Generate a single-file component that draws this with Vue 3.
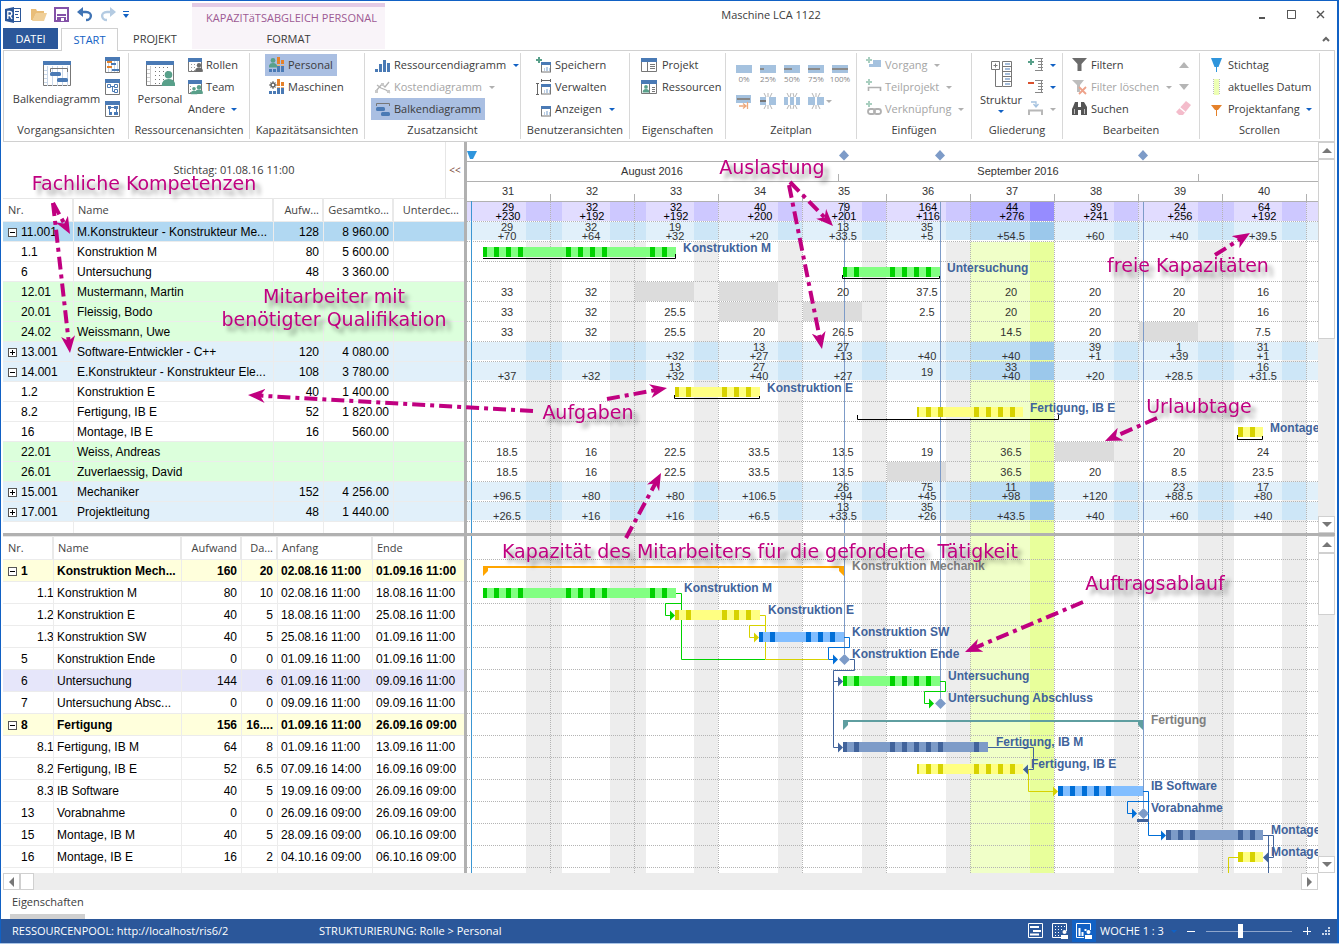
<script setup>
import { h } from 'vue'

const B = '#4a7ab5'
const G = '#777777'
const frame = (x, y, w, hh) =>
  `<path d="M${x + 0.5} ${y}v${hh - 0.5}h${w - 1}v${-(hh - 0.5)}" fill="#fff" stroke="${G}"/><rect x="${x}" y="${y}" width="${w}" height="4" fill="${B}"/>`
const person = (cx, y, s, c) =>
  `<circle cx="${cx}" cy="${y + s}" r="${s}" fill="${c}"/><path d="M${cx - s * 1.8} ${y + s * 4}q0 ${-s * 1.9} ${s * 1.8} ${-s * 1.9}t${s * 1.8} ${s * 1.9}z" fill="${c}"/>`
const viewIcon = '<rect x="5.500" y="5.500" width="9" height="9.500" fill="#fff" stroke="#777"/><rect x="5" y="5" width="10" height="3" fill="#4a7ab5"/><path d="M8 11h1v3h-1zM10 10h2v4h-2zM13 11h1v3h-1z" fill="#b9cde4"/>'
const plus = (x, y, c) => `<path d="M${x + 2} ${y}h2v2h2v2h-2v2h-2v-2h-2v-2h2z" fill="${c}"/>`
const capacity = '<path d="M8 0h3v7h-3zM12 3h3v4h-3z" fill="#e5812a"/><path d="M8 8h3v2h-3zM12 8h3v2h-3z" fill="#e9b17c"/><path d="M0 12h3v3H0zM4 12h3v3H4zM8 9h3v6h-3zM12 9h3v6h-3z" fill="#4a7ab5"/>'

const icons = {
  app: '<rect x="6.500" y="1.500" width="9" height="13" fill="#fff" stroke="#2b579a"/><path d="M10 4.500h4M10 7.500h3M11 10.500h3" stroke="#2b579a"/><path d="M0 2l9-2v16l-9-2z" fill="#2b579a"/><path d="M2.800 12V4.500h2q2 0 2 2t-2 2h-2M5 8.500L7 12" fill="none" stroke="#fff" stroke-width="1.300"/>',
  open: '<path d="M0 13V2h5l1 2h7v3H5L2 13z" fill="#e9bd78"/><path d="M1 14L5 6h11l-3 8z" fill="#f0cf98"/>',
  save: '<path d="M1 1h13v13H1z" fill="#fff" stroke="#8452a8" stroke-width="2"/><path d="M3 7h9v2H3zM3 10h9v4H3z" fill="#8452a8"/><path d="M5 11h5v3H5z" fill="#fff"/><path d="M5 11h2v3H5z" fill="#8452a8"/>',
  undo: '<path d="M2 5h7c7 0 6 8 0 8" fill="none" stroke="#3f73b4" stroke-width="2.400"/><path d="M6 0L0 5l6 5z" fill="#3f73b4"/>',
  redo: '<path d="M14 5H7c-7 0-6 8 0 8" fill="none" stroke="#b4cbe2" stroke-width="2.400"/><path d="M10 0l6 5-6 5z" fill="#b4cbe2"/>',
  gantt: frame(0, 0, 28, 25) + `<path d="M4.500 5v20M9.500 5v20M14.500 5v20M19.500 5v20M24.500 5v20M1 9.500h3M1 13.500h3M1 17.500h3M1 21.500h3" stroke="#c9d7e8"/><path d="M7.500 11V7.500h17V11" fill="none" stroke="${G}"/><rect x="7" y="11" width="11" height="4" rx="1.500" fill="${B}"/><rect x="14" y="17" width="11" height="4" rx="1.500" fill="${B}"/>`,
  people: frame(0, 0, 28, 25) + `<path d="M4.500 5v19M1 8.500h3M1 12.500h3M1 16.500h3M1 20.500h3" stroke="#ccc"/><path d="M9.500 6v18M13.500 6v18M17.500 6v18M21.500 6v8" stroke="${G}" stroke-dasharray="1 3"/>` + person(22.500, 10, 3.800, '#58a08a'),
  small1: frame(0, 0, 15, 16) + '<path d="M3.500 4v11M6.500 4v11M9.500 4v11M12.500 4v11" stroke="#c9d7e8"/><rect x="2" y="4" width="5" height="2" fill="#e5812a"/><rect x="2" y="9" width="5" height="2" fill="#e5812a"/><rect x="6" y="6" width="5" height="2" fill="#4a7ab5"/><rect x="7" y="12" width="7" height="2" fill="#4a7ab5"/>',
  small2: frame(0, 0, 15, 16) + '<path d="M2.500 5.500h3v3h-3zM9.500 5.500h3v3h-3zM9.500 10.500h3v3h-3zM6 7.500h3M7.500 8v4.500h2" fill="none" stroke="#4a7ab5"/>',
  small3: frame(0, 0, 15, 16) + '<path d="M3 5h3v3H3zM9 5h4v3H9zM4 11h3v3H4zM9 11h4v3H9z" fill="#4a7ab5"/><path d="M6 6.500h3M4.500 8v4h1M11.500 8v3" fill="none" stroke="#4a7ab5"/>',
  roles: frame(0, 1, 14, 14) + '<path d="M3.500 7v7M6.500 7v7" stroke="#999" stroke-dasharray="1 2"/>' + person(11, 6, 2.200, '#6b6b6b'),
  team: frame(0, 1, 14, 14) + '<path d="M2.500 7v7" stroke="#999" stroke-dasharray="1 2"/>' + person(6, 8, 1.800, '#58a08a') + person(11, 6, 2.200, '#58a08a'),
  capPerson: capacity + person(4, 1, 2.400, '#58a08a'),
  capMachine: capacity + '<circle cx="4" cy="6" r="2" fill="none" stroke="#666" stroke-width="1.600"/><path d="M4 2v2M4 8v2M0 6h2M6 6h2M1.500 3.500l1 1M5.500 7.500l1 1M6.500 3.500l-1 1M1.500 8.500l1-1" stroke="#666"/>',
  bars: '<path d="M0 12h3v3H0zM4 7h3v8H4zM8 3h3v12H8zM12 6h3v9h-3z" fill="#4a7ab5"/>',
  cost: '<path d="M1 12L7 5l3 3 4-5M2 6l4 3 5 2 4 3" fill="none" stroke="#b5b5b5" stroke-width="1.300"/><path d="M0 11h3v3H0zM6 4h3v3H6zM12 11h3v3h-3z" fill="#c9c9c9"/>',
  barChart: `<path d="M1.500 5V2.500h13V5" fill="none" stroke="${G}"/><rect x="1" y="6" width="9" height="4" rx="1.500" fill="${B}"/><rect x="6" y="11" width="9" height="4" rx="1.500" fill="${B}"/>`,
  saveView: plus(0, 0, '#58a08a') + viewIcon,
  manageView: '<path d="M1.500 4.500v11M0 4.500h3M0 15.500h3M5 1.500h10M5.500 0v3M14.500 0v3" stroke="#666"/>' + viewIcon,
  showView: viewIcon,
  project: frame(0, 1, 16, 14) + '<path d="M6.500 5v9M9 7.500h5M9 9.500h5M9 11.500h5" stroke="#777"/>',
  resource: frame(0, 1, 16, 14) + person(5, 6, 1.900, '#58a08a') + '<path d="M8.500 5v9M11 8.500h3M11 10.500h3M11 12.500h3" stroke="#777"/>',
  move: '<rect y="2" width="15" height="8" fill="#a5c2df"/><path d="M1 6h13" stroke="#888" stroke-width="2"/><path d="M3 13h6M7 10.500l3 2.500-3 2.500M11.500 9v7" fill="none" stroke="#eea97c" stroke-width="1.300"/>',
  split1: '<path d="M4 0l2 4M8 0v4M12 0l-2 4M4 16l2-4M8 16v-4M12 16l-2-4" stroke="#b5b5b5"/><path d="M0 4h6v8H0zM9 4h7v8H9z" fill="#a5c2df"/><path d="M0 8h6" stroke="#777" stroke-width="2"/>',
  split2: '<path d="M3 0l2 4M7 0L6 4M9 0l1 4M13 0l-2 4M3 16l2-4M7 16l-1-4M9 16l1-4M13 16l-2-4" stroke="#b5b5b5"/><path d="M0 4h4v8H0zM6 4h4v8H6zM12 4h4v8h-4z" fill="#a5c2df"/>',
  split3: '<path d="M4 0l2 4M8 0v4M12 0l-2 4M4 16l2-4M8 16v-4M12 16l-2-4" stroke="#b5b5b5"/><path d="M0 4h7v8H0zM9 4h7v8H9z" fill="#a5c2df"/>',
  task: plus(0, 0, '#a9cfc0') + '<path d="M7 3h8v7H3V7h4z" fill="#a5c2df"/>',
  subproject: plus(0, 0, '#a9cfc0') + '<path d="M2.500 12V8.500h12V12" fill="none" stroke="#b0b0b0" stroke-width="1.600"/>',
  link: plus(0, 0, '#a9cfc0') + '<rect x="2" y="8" width="7" height="5" rx="2.500" fill="none" stroke="#b0b0b0" stroke-width="1.800"/><rect x="8" y="8" width="7" height="5" rx="2.500" fill="none" stroke="#b0b0b0" stroke-width="1.800"/>',
  structure: '<path d="M.5.500h8v8h-8zM4.500 2.500v4M2.500 4.500h4M4.500 9v16.500H11" fill="none" stroke="#777"/><path d="M11.500.500h9v25h-9z" fill="#fff" stroke="#777"/><path d="M11 5.500h10M11 10.500h10M11 15.500h10M11 20.500h10" stroke="#777"/><path d="M14 3h5M14 8h5M14 13h5M14 18h5M14 23h5" stroke="#4a7ab5"/>',
  indent: plus(0, 2, '#58a08a') + '<path d="M7 1.500h8M10 4.500h5M10 7.500h5M10 10.500h5M7 13.500h8M13.500 1v12" stroke="#888"/>',
  outdent: '<rect y="3" width="6" height="2" fill="#d9502e"/><path d="M7 1.500h8M10 4.500h5M10 7.500h5M10 10.500h5M7 13.500h8M13.500 1v12" stroke="#888"/>',
  collapse: '<path d="M1 14V9.500h13V14" fill="none" stroke="#b8b8b8" stroke-width="2"/><path d="M3 1h5v4M5.500 3L8 6l2.500-3" fill="none" stroke="#a5c2df" stroke-width="1.300"/>',
  filter: '<path d="M0 1h15l-5.500 6v7h-4V7z" fill="#6b6b6b"/>',
  filterOff: '<path d="M0 1h12L8 6v7H5V6z" fill="#bdbdbd"/><path d="M7 8l7 7M14 8l-7 7" stroke="#eea28a" stroke-width="1.800"/>',
  search: '<path d="M1 6l2-5h3v5h3V1h3l3 5v8H9V9H6v5H0V8z" fill="#555"/><path d="M2.500 8v5M12.500 8v5" stroke="#bbb"/>',
  eraser: '<path d="M10 0l5 4-8 10H3l-3-3z" fill="#f4bccb"/><path d="M3 6l6 5" stroke="#fff" stroke-width="1.500"/>',
  pinBlue: '<path d="M1 1h11L8.500 10h-4z" fill="#2f95dc"/><path d="M6.500 8v7" stroke="#2f95dc"/>',
  today: '<rect x="4" y="0" width="5" height="16" fill="#edffb4"/><path d="M3.500 0v16M9.500 0v16" stroke="#bbb" stroke-dasharray="1 1"/>',
  pinOrange: '<path d="M1 4h11L8 9H5z" fill="#e5812a"/><path d="M6.500 8v7" stroke="#e5812a"/>',
  st1: '<path d="M.5.500h14v14H.5z" fill="none" stroke="#fff"/><path d="M2 4h9M5 8h8M2 11.500h9" stroke="#fff" stroke-width="2"/>',
  st2: '<path d="M9 14.500H.5V.500h14V8" fill="none" stroke="#fff"/><path d="M3.500 3v10M6.500 3v10M9.500 3v5M12.500 3v3" stroke="#fff" stroke-dasharray="1 2"/><circle cx="12.500" cy="9" r="2" fill="#fff"/><path d="M9 12h7v4H9z" fill="#fff"/>',
  st3: '<path d="M8 14.500H.5V.500h14V7" fill="none" stroke="#fff"/><path d="M3.500 5v8M6.500 9v4M9.500 6v2" stroke="#fff" stroke-width="2"/><circle cx="12.500" cy="9" r="2" fill="#fff"/><path d="M9 12h7v4H9z" fill="#fff"/>',
}
const Icon = (p) =>
  h('svg', { width: p.w || 16, height: p.h || 16, viewBox: `0 0 ${p.w || 16} ${p.h || 16}`, 'aria-hidden': 'true', innerHTML: icons[p.name] })
Icon.props = ['name', 'w', 'h']

/* resource table */
const resources = [
  { k: 'sel', exp: '-', nr: '11.001', name: 'M.Konstrukteur - Konstrukteur Me...', a: '128', g: '8 960.00',
    up: [29, 32, 19, '', 13, 35, '', '', '', ''], lo: ['+70', '+64', '+32', '+20', '+33.5', '+5', '+54.5', '+60', '+40', '+39.5'] },
  { k: '', nr: '1.1', name: 'Konstruktion M', a: '80', g: '5 600.00' },
  { k: '', nr: '6', name: 'Untersuchung', a: '48', g: '3 360.00' },
  { k: 'staff', nr: '12.01', name: 'Mustermann, Martin', mid: ['33', '32', null, null, '20', '37.5', '20', '20', '20', '16'] },
  { k: 'staff', nr: '20.01', name: 'Fleissig, Bodo', mid: ['33', '32', '25.5', null, null, '2.5', '20', '20', '20', '16'] },
  { k: 'staff', nr: '24.02', name: 'Weissmann, Uwe', mid: ['33', '32', '25.5', '20', '26.5', '', '14.5', '20', null, '7.5'] },
  { k: 'role', exp: '+', nr: '13.001', name: 'Software-Entwickler - C++', a: '120', g: '4 080.00',
    up: ['', '', '', 13, 27, '', '', 39, 1, 31], lo: ['', '', '+32', '+27', '+13', '+40', '+40', '+1', '+39', '+1'] },
  { k: 'role', exp: '-', nr: '14.001', name: 'E.Konstrukteur - Konstrukteur Ele...', a: '108', g: '3 780.00',
    up: ['', '', 13, 27, '', '', 33, '', '', 16], lo: ['+37', '+32', '+32', '+40', '+27', '', '+40', '+20', '+28.5', '+31.5'],
    mid: ['', '', '', '', '', '19', '', '', '', ''] },
  { k: '', nr: '1.2', name: 'Konstruktion E', a: '40', g: '1 400.00' },
  { k: '', nr: '8.2', name: 'Fertigung, IB E', a: '52', g: '1 820.00' },
  { k: '', nr: '16', name: 'Montage, IB E', a: '16', g: '560.00' },
  { k: 'staff', nr: '22.01', name: 'Weiss, Andreas', mid: ['18.5', '16', '22.5', '33.5', '13.5', '19', '36.5', null, '20', '24'] },
  { k: 'staff', nr: '26.01', name: 'Zuverlaessig, David', mid: ['18.5', '16', '22.5', '33.5', '13.5', null, '36.5', '20', '8.5', '23.5'] },
  { k: 'role', exp: '+', nr: '15.001', name: 'Mechaniker', a: '152', g: '4 256.00',
    up: ['', '', '', '', 26, 75, 11, '', 23, 17], lo: ['+96.5', '+80', '+80', '+106.5', '+94', '+45', '+98', '+120', '+88.5', '+80'] },
  { k: 'role', exp: '+', nr: '17.001', name: 'Projektleitung', a: '48', g: '1 440.00',
    up: ['', '', '', '', 13, 35, '', '', '', ''], lo: ['+26.5', '+16', '+16', '+6.5', '+33.5', '+26', '+43.5', '+40', '+60', '+40'] },
]
const totals = {
  up: [29, 32, 32, 40, 79, 164, 44, 39, 24, 64],
  lo: ['+230', '+192', '+192', '+200', '+201', '+116', '+276', '+241', '+256', '+192'],
}

/* task table */
const T = (k, nr, name, a, d, s, e, exp = '') => ({ k, nr, name, a, d, s, e, exp })
const tasks = [
  T('sum', '1', 'Konstruktion Mech...', '160', '20', '02.08.16 11:00', '01.09.16 11:00', '-'),
  T('sub', '1.1', 'Konstruktion M', '80', '10', '02.08.16 11:00', '18.08.16 11:00'),
  T('sub', '1.2', 'Konstruktion E', '40', '5', '18.08.16 11:00', '25.08.16 11:00'),
  T('sub', '1.3', 'Konstruktion SW', '40', '5', '25.08.16 11:00', '01.09.16 11:00'),
  T('', '5', 'Konstruktion Ende', '0', '0', '01.09.16 11:00', '01.09.16 11:00'),
  T('hot', '6', 'Untersuchung', '144', '6', '01.09.16 11:00', '09.09.16 11:00'),
  T('', '7', 'Untersuchung Absc...', '0', '0', '09.09.16 11:00', '09.09.16 11:00'),
  T('sum', '8', 'Fertigung', '156', '16....', '01.09.16 11:00', '26.09.16 09:00', '-'),
  T('sub', '8.1', 'Fertigung, IB M', '64', '8', '01.09.16 11:00', '13.09.16 11:00'),
  T('sub', '8.2', 'Fertigung, IB E', '52', '6.5', '07.09.16 14:00', '16.09.16 09:00'),
  T('sub', '8.3', 'IB Software', '40', '5', '19.09.16 09:00', '26.09.16 09:00'),
  T('', '13', 'Vorabnahme', '0', '0', '26.09.16 09:00', '26.09.16 09:00'),
  T('', '15', 'Montage, IB M', '40', '5', '28.09.16 09:00', '06.10.16 09:00'),
  T('', '16', 'Montage, IB E', '16', '2', '04.10.16 09:00', '06.10.16 09:00'),
]

/* time scale: 12 px per day, 84 px per week; week 31 starts at 466 */
const weeks = Array.from({ length: 30 }, (_, i) => ({ i, no: 31 + i, x: 466 + i * 84 }))
const shown = weeks.slice(0, 10)
const holidays = [1, 2, 9]
const offDays = weeks.flatMap((w) => {
  const list = [{ x: w.x + 60, w: 24, now: w.i === 6 }]
  if (holidays.includes(w.i)) list.push({ x: w.x, w: 12, now: false })
  return list
})
const stripes = (x0, x1) => {
  const out = []
  for (const w of weeks) {
    for (let d = 0; d < 5; d++) {
      if (d === 0 && holidays.includes(w.i)) continue
      const s = w.x + d * 12 + 4
      if (s + 5 <= x0 || s >= x1 - 3) continue
      out.push({ x: Math.max(s, x0), w: s + 5 - Math.max(s, x0) })
    }
  }
  return out
}
const green = ['#82ff82', '#00d200']
const yellow = ['#ffff82', '#d7d200']
const blue = ['#82beff', '#006ed7']
const steel = ['#7d9bc8', '#41639b']
const bar = (row, x0, x1, c, label, lx, br) => ({ row, x0, x1, c, label, lx, br, s: stripes(x0, x1) })
const upperBars = [
  bar(1, 483, 676, green, 'Konstruktion M', 683, 'M483 258.500H675.500V254'),
  bar(2, 843, 940, green, 'Untersuchung', 947, 'M842.500 275V278.500H939.500V276'),
  bar(8, 675, 760, yellow, 'Konstruktion E', 767, 'M674.500 395V398.500H759.500V396'),
  bar(9, 917, 1023, yellow, 'Fertigung, IB E', 1030, 'M857.500 415V419.500H1058.500V415'),
  bar(10, 1238, 1263, yellow, 'Montage, IB E', 1270, 'M1237.500 435V439.500H1262.500V436'),
]
const lowerBars = [
  bar(1, 483, 676, green, 'Konstruktion M', 684),
  bar(2, 675, 760, yellow, 'Konstruktion E', 768),
  bar(3, 759, 844, blue, 'Konstruktion SW', 852),
  bar(5, 843, 940, green, 'Untersuchung', 948),
  bar(8, 843, 988, steel, 'Fertigung, IB M', 996),
  bar(9, 917, 1023, yellow, 'Fertigung, IB E', 1031),
  bar(10, 1058, 1143, blue, 'IB Software', 1151),
  bar(12, 1166, 1263, steel, 'Montage, IB M', 1271),
  bar(13, 1238, 1263, yellow, 'Montage, IB E', 1271),
]
const milestones = [
  { x: 844, y: 659, label: 'Konstruktion Ende', lx: 852 },
  { x: 940, y: 703, label: 'Untersuchung Abschluss', lx: 948 },
  { x: 1143, y: 813, label: 'Vorabnahme', lx: 1151 },
]
const summaries = [
  { x0: 483, x1: 844, y: 566, c: '#ffa500', label: 'Konstruktion Mechanik', lx: 852 },
  { x0: 843, x1: 1143, y: 720, c: '#5f9ea0', label: 'Fertigung', lx: 1151 },
]
const links = [
  { c: green[1], d: 'M676 593.500H681.500V603.500H665.500V615.500H670M681.500 603V659.500H765' },
  { c: yellow[1], d: 'M760 615.500H765.500V625.500H749.500V637.500H755M765.500 625V659.500H828' },
  { c: blue[1], d: 'M844 637.500H849.500V647.500H828.500V659.500H834' },
  { c: steel[1], d: 'M850 659.500H854.500V670.500H833.500V747.500H839M833.500 681.500H839' },
  { c: green[1], d: 'M940 681.500H945.500V691.500H924.500V703.500H930' },
  { c: steel[1], d: 'M988 747.500H1033.500V769.500H1028' },
  { c: yellow[1], d: 'M1023 769.500H1028.500V791.500H1054' },
  { c: blue[1], d: 'M1143 791.500H1148.500V835.500H1162M1148.500 801.500H1127.500V813.500H1133' },
  { c: steel[1], d: 'M1263 835.500H1273.500V857.500H1268M1268.500 835V873' },
  { c: yellow[1], d: 'M1238 857.500H1228.500V873' },
]
const heads = [
  [675, 615, green[1], 1], [759, 637, yellow[1], 1], [838, 659, blue[1], 1], [843, 681, steel[1], 1],
  [843, 747, steel[1], 1], [934, 703, green[1], 1], [1023, 769, steel[1], -1], [1058, 791, yellow[1], 1],
  [1137, 813, blue[1], 1], [1166, 835, blue[1], 1], [1263, 857, steel[1], -1],
]
const deadlines = [[844, 654], [940, 698], [1143, 808]]

/* callouts */
const notes = [
  [144, 190, 'Fachliche Kompetenzen'], [334, 303, 'Mitarbeiter mit'], [334, 326, 'benötigter Qualifikation'],
  [772, 174, 'Auslastung'], [1188, 272, 'freie Kapazitäten'], [588, 419, 'Aufgaben'], [1199, 413, 'Urlaubtage'],
  [760, 558, 'Kapazität des Mitarbeiters für die geforderte  Tätigkeit'], [1155, 590, 'Auftragsablauf'],
]
const arrows = [
  [53, 203, 70, 234], [53, 203, 70, 353], [790, 182, 833, 226], [789, 185, 822, 349], [1215, 255, 1250, 233],
  [533, 411, 248, 395], [607, 399, 667, 388], [1157, 418, 1105, 441], [626, 538, 661, 473], [1083, 602, 965, 652],
].map(([x1, y1, x2, y2]) => {
  const len = Math.hypot(x2 - x1, y2 - y1)
  return { x1, y1, x2: x2 - ((x2 - x1) / len) * 10, y2: y2 - ((y2 - y1) / len) * 10 }
})
</script>

<template>
  <div class="window">
    <header class="titlebar">
      <div class="quick">
        <Icon name="app" />
        <button aria-label="Öffnen"><Icon name="open" /></button>
        <button aria-label="Speichern"><Icon name="save" /></button>
        <button aria-label="Rückgängig"><Icon name="undo" /></button>
        <button aria-label="Wiederholen"><Icon name="redo" /></button>
        <button aria-label="Anpassen"><svg width="6" height="8"><path d="M0 .500h6" stroke="#1161c4" /><path d="M0 3h6L3 7z" fill="#1161c4" /></svg></button>
      </div>
      <div class="context-title">KAPAZITäTSABGLEICH PERSONAL</div>
      <h1>Maschine LCA 1122</h1>
      <div class="sys">
        <button aria-label="Minimieren"><svg width="9" height="9"><path d="M1 8h6" stroke="#555" stroke-width="2" /></svg></button>
        <button aria-label="Maximieren"><svg width="9" height="9"><path d="M.5 0v8.500h8V.500H0" fill="none" stroke="#555" /></svg></button>
        <button aria-label="Schließen"><svg width="9" height="9"><path d="M1 1l7 7M8 1l-7 7" stroke="#555" stroke-width="1.400" /></svg></button>
      </div>
    </header>

    <nav class="tabs">
      <button class="file">DATEI</button>
      <button class="active">START</button>
      <button class="projekt">PROJEKT</button>
      <button class="format">FORMAT</button>
      <button class="fold" aria-label="Menüband reduzieren"><svg width="8" height="6"><path d="M1 5l3-3 3 3" fill="none" stroke="#666" stroke-width="2" /></svg></button>
    </nav>

    <section class="ribbon">
      <div class="group g1">
        <div class="body">
          <button class="big"><Icon name="gantt" w="28" h="25" /><span>Balkendiagramm</span></button>
          <div class="col">
            <button class="item bare" aria-label="Ansicht Netzplan"><Icon name="small1" /></button>
            <button class="item bare" aria-label="Ansicht Struktur"><Icon name="small2" /></button>
            <button class="item bare" aria-label="Ansicht Tabelle"><Icon name="small3" /></button>
          </div>
        </div>
        <div class="cap">Vorgangsansichten</div>
      </div>
      <div class="group g2">
        <div class="body">
          <button class="big"><Icon name="people" w="29" h="25" /><span>Personal</span></button>
          <div class="col">
            <button class="item bare"><Icon name="roles" />Rollen</button>
            <button class="item bare"><Icon name="team" />Team</button>
            <button class="item bare">Andere<i class="arr"></i></button>
          </div>
        </div>
        <div class="cap">Ressourcenansichten</div>
      </div>
      <div class="group g3">
        <div class="body col">
          <button class="item on"><Icon name="capPerson" />Personal</button>
          <button class="item"><Icon name="capMachine" />Maschinen</button>
        </div>
        <div class="cap">Kapazitätsansichten</div>
      </div>
      <div class="group g4">
        <div class="body col">
          <button class="item"><Icon name="bars" />Ressourcendiagramm<i class="arr"></i></button>
          <button class="item" disabled><Icon name="cost" />Kostendiagramm<i class="arr"></i></button>
          <button class="item on"><Icon name="barChart" />Balkendiagramm</button>
        </div>
        <div class="cap">Zusatzansicht</div>
      </div>
      <div class="group g5">
        <div class="body col">
          <button class="item"><Icon name="saveView" />Speichern</button>
          <button class="item"><Icon name="manageView" />Verwalten</button>
          <button class="item"><Icon name="showView" />Anzeigen<i class="arr"></i></button>
        </div>
        <div class="cap">Benutzeransichten</div>
      </div>
      <div class="group g6">
        <div class="body col">
          <button class="item"><Icon name="project" />Projekt</button>
          <button class="item"><Icon name="resource" />Ressourcen</button>
        </div>
        <div class="cap">Eigenschaften</div>
      </div>
      <div class="group g7">
        <div class="body col">
          <div class="percents">
            <button v-for="(p, i) in ['0%', '25%', '50%', '75%', '100%']" :key="p" disabled>
              <svg width="16" height="8"><rect width="16" height="8" fill="#a5c2df" /><path :d="`M0 4h${i * 4}`" stroke="#8a8a8a" stroke-width="2" /></svg>
              {{ p }}
            </button>
          </div>
          <div class="splits">
            <button disabled aria-label="Verschieben"><Icon name="move" /></button>
            <button disabled aria-label="Unterbrechen"><Icon name="split1" /></button>
            <button disabled aria-label="Teilen"><Icon name="split2" /></button>
            <button disabled aria-label="Trennen"><Icon name="split3" /><i class="arr"></i></button>
          </div>
        </div>
        <div class="cap">Zeitplan</div>
      </div>
      <div class="group g8">
        <div class="body col">
          <button class="item" disabled><Icon name="task" />Vorgang<i class="arr"></i></button>
          <button class="item" disabled><Icon name="subproject" />Teilprojekt<i class="arr"></i></button>
          <button class="item" disabled><Icon name="link" />Verknüpfung<i class="arr"></i></button>
        </div>
        <div class="cap">Einfügen</div>
      </div>
      <div class="group g9">
        <div class="body">
          <button class="big"><Icon name="structure" w="21" h="26" /><span>Struktur</span><i class="arr"></i></button>
          <div class="col">
            <button class="item bare" aria-label="Einblenden"><Icon name="indent" /><i class="arr"></i></button>
            <button class="item bare" aria-label="Ausblenden"><Icon name="outdent" /><i class="arr"></i></button>
            <button class="item bare" disabled aria-label="Zusammenfassen"><Icon name="collapse" /><i class="arr"></i></button>
          </div>
        </div>
        <div class="cap">Gliederung</div>
      </div>
      <div class="group g10">
        <div class="body spread">
          <div class="col">
            <button class="item"><Icon name="filter" />Filtern</button>
            <button class="item" disabled><Icon name="filterOff" />Filter löschen<i class="arr"></i></button>
            <button class="item"><Icon name="search" />Suchen</button>
          </div>
          <div class="col mid">
            <button class="item bare" aria-label="Vorheriger"><svg width="10" height="6"><path d="M0 6l5-6 5 6z" fill="#b5b5b5" /></svg></button>
            <button class="item bare" aria-label="Nächster"><svg width="10" height="6"><path d="M0 0l5 6 5-6z" fill="#b5b5b5" /></svg></button>
            <button class="item bare" aria-label="Löschen"><Icon name="eraser" /></button>
          </div>
        </div>
        <div class="cap">Bearbeiten</div>
      </div>
      <div class="group g11">
        <div class="body col">
          <button class="item"><Icon name="pinBlue" />Stichtag</button>
          <button class="item"><Icon name="today" />aktuelles Datum</button>
          <button class="item"><Icon name="pinOrange" />Projektanfang<i class="arr"></i></button>
        </div>
        <div class="cap">Scrollen</div>
      </div>
    </section>

    <main class="work">
      <div class="pane">
        <div class="keydate"><span>Stichtag: 01.08.16 11:00</span><button>&lt;&lt;</button></div>
        <table class="res">
          <colgroup><col class="c-nr" /><col class="c-name" /><col class="c-a" /><col class="c-g" /><col /></colgroup>
          <thead>
            <tr><th>Nr.</th><th>Name</th><th class="r">Aufw...</th><th class="r">Gesamtko...</th><th class="r">Unterdec...</th></tr>
          </thead>
          <tbody>
            <tr v-for="r in resources" :key="r.nr" :class="r.k">
              <td class="nr"><button v-if="r.exp" class="exp" :aria-label="r.exp === '+' ? 'Aufklappen' : 'Zuklappen'"><svg width="7" height="7"><path :d="r.exp === '+' ? 'M1 3.500h5M3.500 1v5' : 'M1 3.500h5'" stroke="#000" /></svg></button><span>{{ r.nr }}</span></td>
              <td>{{ r.name }}</td><td class="r">{{ r.a }}</td><td class="r">{{ r.g }}</td><td></td>
            </tr>
            <tr class="rest"><td></td><td></td><td></td><td></td><td></td></tr>
          </tbody>
        </table>
      </div>
      <div class="vsplit"></div>
      <svg class="chart upper" role="img" aria-label="Kapazitätsdiagramm">
        <g transform="translate(-467 -142)">
          <g class="scale">
            <path d="M467 161.500H4000M467 181.500H4000M467 201.500H4000M838.500 174V181M1198.500 174V181" class="axis" />
            <path v-for="w in weeks" :key="w.i" :d="`M${w.x + 84}.500 194V201`" class="axis" />
            <text x="652" y="175">August 2016</text>
            <text x="1018" y="175">September 2016</text>
            <text v-for="w in shown" :key="w.no" :x="w.x + 42" y="195">{{ w.no }}</text>
            <path d="M467 151h10l-4 8h-3z" fill="#2f95dc" />
            <path v-for="d in deadlines" :key="d[0]" :d="`M${d[0]} 150l5 5.500-5 5-5-5z`" fill="#7d9bc8" />
          </g>
          <rect x="970" y="242" width="84" height="300" fill="#f0ffc8" />
          <rect v-for="(o, i) in offDays" :key="i" :x="o.x" y="242" :width="o.w" height="300" :fill="o.now ? '#e8ff9b' : '#ededed'" />
          <rect x="467" y="202" width="3000" height="19" fill="#e1dcff" />
          <rect x="970" y="202" width="84" height="19" fill="#b9b4ff" />
          <rect v-for="(o, i) in offDays" :key="'t' + i" :x="o.x" y="202" :width="o.w" height="19" :fill="o.now ? '#968cff' : '#cdc8ff'" />
          <template v-for="(r, n) in resources" :key="'b' + n">
            <g v-if="r.lo">
              <rect x="467" :y="222 + n * 20" width="3000" height="18" fill="#e1f0fa" />
              <rect x="970" :y="222 + n * 20" width="84" height="18" fill="#bcdcf3" />
              <rect v-for="(o, i) in offDays" :key="i" :x="o.x" :y="222 + n * 20" :width="o.w" height="18" :fill="o.now ? '#9bc8eb' : '#cde6f7'" />
            </g>
            <g v-else-if="r.mid">
              <template v-for="(v, i) in r.mid" :key="i"><rect v-if="v === null" :x="466 + i * 84 + 1" :y="222 + n * 20" width="59" height="19" fill="#dcdcdc" /></template>
            </g>
          </template>
          <path v-for="n in 16" :key="'h' + n" :d="`M467 ${201 + n * 20}.500H4000`" class="dots" />
          <path v-for="w in weeks" :key="'v' + w.i" :d="`M${w.x + 84}.500 202V533`" class="dots" />
          <path v-for="d in deadlines" :key="'d' + d[0]" :d="`M${d[0]}.500 202V533`" stroke="#7d9bc8" />
          <path d="M471.500 201V533" stroke="#3c96d2" />
          <template v-for="w in shown" :key="'x' + w.no">
            <text :x="w.x + 42" y="211" class="tot">{{ totals.up[w.i] }}</text>
            <text :x="w.x + 42" y="220" class="tot">{{ totals.lo[w.i] }}</text>
            <template v-for="(r, n) in resources" :key="n">
              <text v-if="r.up && r.up[w.i]" :x="w.x + 41" :y="231 + n * 20">{{ r.up[w.i] }}</text>
              <text v-if="r.lo && r.lo[w.i]" :x="w.x + 41" :y="240 + n * 20">{{ r.lo[w.i] }}</text>
              <text v-if="r.mid && r.mid[w.i]" :x="w.x + 41" :y="236 + n * 20">{{ r.mid[w.i] }}</text>
            </template>
          </template>
          <g v-for="b in upperBars" :key="b.label">
            <rect :x="b.x0" :y="227 + b.row * 20" :width="b.x1 - b.x0" height="10" :fill="b.c[0]" />
            <rect v-for="s in b.s" :key="s.x" :x="s.x" :y="227 + b.row * 20" :width="s.w" height="10" :fill="b.c[1]" />
            <path :d="b.br" fill="none" stroke="#000" />
            <text :x="b.lx" :y="232 + b.row * 20" class="lab">{{ b.label }}</text>
          </g>
        </g>
      </svg>
      <div class="vbar">
        <button aria-label="Nach oben"><svg width="10" height="6"><path d="M0 5l5-5 5 5z" fill="#777" /></svg></button>
        <div class="thumb tall"></div>
        <button class="end" aria-label="Nach unten"><svg width="10" height="6"><path d="M0 0l5 5 5-5z" fill="#777" /></svg></button>
      </div>

      <div class="hsplit"></div>

      <div class="pane">
        <table class="tasks">
          <colgroup><col class="t-nr" /><col class="t-name" /><col class="t-a" /><col class="t-d" /><col class="t-s" /><col /></colgroup>
          <thead>
            <tr><th>Nr.</th><th>Name</th><th class="r">Aufwand</th><th class="r">Da...</th><th>Anfang</th><th>Ende</th></tr>
          </thead>
          <tbody>
            <tr v-for="t in tasks" :key="t.nr" :class="t.k">
              <td class="nr"><button v-if="t.exp" class="exp" aria-label="Zuklappen"><svg width="7" height="7"><path d="M1 3.500h5" stroke="#000" /></svg></button><span>{{ t.nr }}</span></td>
              <td>{{ t.name }}</td><td class="r">{{ t.a }}</td><td class="r">{{ t.d }}</td><td>{{ t.s }}</td><td>{{ t.e }}</td>
            </tr>
            <tr class="rest"><td></td><td></td><td></td><td></td><td></td><td></td></tr>
          </tbody>
        </table>
      </div>
      <div class="vsplit"></div>
      <svg class="chart lower" role="img" aria-label="Balkendiagramm">
        <g transform="translate(-467 -536)">
          <rect x="970" y="536" width="84" height="337" fill="#f0ffc8" />
          <rect v-for="(o, i) in offDays" :key="i" :x="o.x" y="536" :width="o.w" height="337" :fill="o.now ? '#e8ff9b' : '#ededed'" />
          <path v-for="n in 15" :key="'h' + n" :d="`M467 ${537 + n * 22}.500H4000`" class="dots" />
          <path v-for="w in weeks" :key="'v' + w.i" :d="`M${w.x + 84}.500 536V873`" class="dots" />
          <path v-for="d in deadlines" :key="d[0]" :d="`M${d[0]}.500 536V${d[1]}`" stroke="#7d9bc8" />
          <path d="M471.500 536V873" stroke="#3c96d2" />
          <g v-for="s in summaries" :key="s.label">
            <path :d="`M${s.x0} ${s.y}H${s.x1}v10l-5-5v-3H${s.x0 + 5}v3l-5 5z`" :fill="s.c" />
            <text :x="s.lx" :y="s.y + 4" class="lab grey">{{ s.label }}</text>
          </g>
          <path v-for="l in links" :key="l.d" :d="l.d" fill="none" :stroke="l.c" />
          <g v-for="b in lowerBars" :key="b.label">
            <rect :x="b.x0" :y="566 + b.row * 22" :width="b.x1 - b.x0" height="10" :fill="b.c[0]" />
            <rect v-for="s in b.s" :key="s.x" :x="s.x" :y="566 + b.row * 22" :width="s.w" height="10" :fill="b.c[1]" />
            <text :x="b.lx" :y="570 + b.row * 22" class="lab">{{ b.label }}</text>
          </g>
          <path v-for="(a, i) in heads" :key="'a' + i" :d="`M${a[0]} ${a[1] + 0.5}l${-5 * a[3]} -5v10z`" :fill="a[2]" />
          <g v-for="m in milestones" :key="m.label">
            <path :d="`M${m.x + 0.5} ${m.y - 5}l5.500 5.500-5.500 5.500-5.500-5.500z`" fill="#7d9bc8" />
            <text :x="m.lx" :y="m.y - 1" class="lab">{{ m.label }}</text>
          </g>
          <rect x="1137" y="819" width="12" height="3" fill="#41639b" />
        </g>
      </svg>
      <div class="vbar">
        <button aria-label="Nach oben"><svg width="10" height="6"><path d="M0 5l5-5 5 5z" fill="#777" /></svg></button>
        <div class="thumb"></div>
        <button class="end" aria-label="Nach unten"><svg width="10" height="6"><path d="M0 0l5 5 5-5z" fill="#777" /></svg></button>
      </div>

      <div class="hbar">
        <button aria-label="Nach links"><svg width="6" height="10"><path d="M5 0L0 5l5 5z" fill="#777" /></svg></button>
        <div class="hthumb"></div>
        <button class="end" aria-label="Nach rechts"><svg width="6" height="10"><path d="M0 0l5 5-5 5z" fill="#777" /></svg></button>
      </div>

      <svg class="notes" aria-label="Erläuterungen">
        <defs>
          <marker id="tip" viewBox="0 0 17 14" refX="7" refY="7" markerWidth="17" markerHeight="14" markerUnits="userSpaceOnUse" orient="auto">
            <path d="M17 7L0 14l5-7L0 0z" fill="#c00080" />
          </marker>
        </defs>
        <g transform="translate(-3 -142)">
          <line v-for="(a, i) in arrows" :key="i" :x1="a.x1" :y1="a.y1" :x2="a.x2" :y2="a.y2" marker-end="url(#tip)" />
          <text v-for="n in notes" :key="n[2]" :x="n[0]" :y="n[1]">{{ n[2] }}</text>
        </g>
      </svg>
    </main>

    <div class="dock"><button>Eigenschaften</button></div>

    <footer class="status">
      <span class="pool">RESSOURCENPOOL: http://localhost/ris6/2</span>
      <span class="struct">STRUKTURIERUNG: Rolle &gt; Personal</span>
      <div class="modes">
        <button aria-label="Balkenansicht"><Icon name="st1" /></button>
        <button aria-label="Personalansicht"><Icon name="st2" /></button>
        <button class="on" aria-label="Kapazitätsansicht"><Icon name="st3" /></button>
      </div>
      <span class="zoomtext">WOCHE 1 : 3</span>
      <i class="arr"></i>
      <button class="step" aria-label="Verkleinern"><svg width="8" height="8"><path d="M0 4.500h8" stroke="#fff" /></svg></button>
      <input type="range" min="0" max="100" value="39" aria-label="Zoom" />
      <button class="step plus" aria-label="Vergrößern"><svg width="8" height="8"><path d="M0 4.500h8M4.500 0v8" stroke="#fff" /></svg></button>
      <svg class="grip" width="9" height="9"><path d="M6 0h2v2H6zM6 3h2v2H6zM3 3h2v2H3zM6 6h2v2H6zM3 6h2v2H3zM0 6h2v2H0z" fill="#c9d6ea" /></svg>
    </footer>
  </div>
</template>

<style>
body { background: #a9c4e6; }
</style>

<style scoped>
.window {
  box-sizing: border-box;
  min-height: 943px;
  display: flex;
  flex-direction: column;
  background: #fff;
  border: 1px solid #1161c4;
  border-width: 1px 2px 0 1px;
  font: 11px/16px "Open Sans", "Noto Sans", sans-serif;
  color: #3b3b3b;
}
button { font: inherit; color: inherit; border: 0; background: none; padding: 0; margin: 0; display: flex; align-items: center; }
svg { display: block; flex: none; }
.arr { border: 3px solid transparent; border-top: 3px solid #1161c4; border-bottom: 0; width: 0; height: 0; margin-left: 4px; flex: none; }
button:disabled { color: #a5a5a5; }
button:disabled .arr { border-top-color: #b0b0b0; }

.titlebar { display: flex; height: 27px; padding: 0 12px 0 4px; }
.quick { display: flex; align-items: center; gap: 6px; width: 187px; box-sizing: border-box; }
.quick svg { margin-right: 1px; }
.quick > svg { margin-right: 4px; }
.context-title { width: 193px; box-sizing: border-box; margin-top: 2px; border-top: 4px solid #e3cbe4; background: #f9f4f9; color: #9d5a94; display: flex; justify-content: center; align-items: center; padding-left: 6px; white-space: nowrap; }
h1 { flex: 1; margin: 0; font: inherit; text-align: center; line-height: 28px; padding-right: 98px; }
.sys { display: flex; gap: 20px; align-items: center; width: 70px; justify-content: flex-end; }

.tabs { display: flex; height: 22px; margin: 0 2px; position: relative; z-index: 1; }
.tabs button { justify-content: center; height: 21px; box-sizing: border-box; }
.tabs .file { width: 55px; background: #2b579a; color: #fff; }
.tabs .active { width: 57px; height: 23px; margin-left: 3px; border: 1px solid #d0d0d0; border-bottom: 0; background: #fff; color: #1161c4; }
.tabs .projekt { width: 74px; }
.tabs .format { width: 193px; background: #f9f4f9; }
.tabs .fold { margin: 0 5px 0 auto; }

.ribbon { display: flex; margin: 0 2px; border: 1px solid #d0d0d0; height: 90px; }
.group { box-sizing: border-box; flex: none; display: flex; flex-direction: column; border-right: 1px solid #d8d8d8; margin: 2px 0; padding-top: 1px; }
.body { display: flex; height: 66px; flex: none; box-sizing: border-box; }
.col, .body.col { display: flex; flex-direction: column; align-items: flex-start; }
.spread { justify-content: space-between; }
.cap { text-align: center; line-height: 19px; white-space: nowrap; }
.item { height: 22px; gap: 3px; padding: 0 4px; white-space: nowrap; }
.item.bare { padding: 0; gap: 2px; }
.item.on { background: #aabfe2; }
.big { flex-direction: column; padding-top: 7px; box-sizing: border-box; height: 66px; }
.big span { margin-top: 5px; }
.big .arr { margin: 2px 0 0; }
.g1 { width: 125px; padding-left: 4px; }
.g1 .big { width: 97px; }
.g1 .cap { margin-left: -4px; }
.g2 { width: 121px; }
.g2 .big { width: 59px; padding-left: 3px; }
.g3 { width: 115px; }
.g3 .body { padding-left: 15px; }
.g4 { width: 156px; }
.g4 .body { padding-left: 6px; }
.g5 { width: 109px; }
.g5 .body { padding-left: 11px; }
.g6 { width: 96px; }
.g6 .body { padding-left: 7px; }
.g6 .item { gap: 5px; }
.g7 { width: 131px; }
.g7 .body { padding: 11px 0 0 6px; }
.percents, .splits { display: flex; }
.percents button { flex-direction: column; width: 24px; font-size: 8px; line-height: 12px; color: #888; }
.splits { padding: 8px 0 0 4px; gap: 8px; }
.splits .arr { margin-left: 2px; }
.g8 { width: 115px; }
.g8 .body { padding-left: 5px; }
.g9 { width: 91px; }
.g9 .big { width: 56px; padding-left: 2px; }
.g10 { width: 137px; }
.g10 .body { padding: 0 8px 0 5px; }
.mid { align-items: center; }
.mid .item { justify-content: center; }
.g11 { width: 120px; }
.g11 .body { padding-left: 6px; }
.g11 .item { gap: 2px; }

.work { position: relative; display: grid; grid-template-columns: 461px 3px minmax(0, 1fr) 17px; margin: 0 2px; }
.vsplit { background: #b1b1b1; }
.hsplit { grid-column: 1 / -1; height: 3px; background: #b1b1b1; }
.keydate { display: flex; height: 56px; }
.keydate span { flex: 1; text-align: center; line-height: 56px; padding-left: 20px; }
.keydate button { width: 19px; box-sizing: border-box; border-left: 1px solid #e6e6e6; font-size: 10px; justify-content: center; color: #7a4a3a; }
table { width: 461px; table-layout: fixed; border-collapse: separate; border-spacing: 0; font-family: "Liberation Sans", Arial, sans-serif; font-size: 12px; color: #000; }
.c-nr { width: 71px; } .c-name { width: 200px; } .c-a { width: 50px; } .c-g { width: 70px; }
.t-nr { width: 51px; } .t-name { width: 128px; } .t-a { width: 60px; } .t-d { width: 36px; } .t-s { width: 95px; }
th, td { box-sizing: border-box; padding: 0 4px 0 3px; border-right: 1px solid #ececec; border-bottom: 1px solid #ececec; white-space: nowrap; overflow: hidden; text-align: left; }
th { height: 24px; border-top: 1px solid #e6e6e6; border-right: 2px solid #e9e9e9; font: 11px/20px "Open Sans", "Noto Sans", sans-serif; color: #444; padding: 0 4px; }
th:first-child { padding-left: 5px; }
td { height: 20px; line-height: 18px; }
.tasks td { height: 22px; line-height: 20px; }
tr > :last-child { border-right: 0; }
.r { text-align: right; }
th.r { padding: 0 3px 0 0; }
th.r:last-child { padding-right: 5px; }
td.r { padding-left: 0; }
td.nr { position: relative; padding: 0 0 0 18px; }
.exp { position: absolute; left: 5px; top: 6px; width: 9px; height: 9px; border: 1px solid #555; background: #fff; }
.tasks .exp { top: 7px; }
.sub td.nr { padding-left: 34px; }
.sel td { background: #b1d8f2; }
.role td { background: #e1f0fa; }
.staff td { background: #dcffdc; }
.sum td { background: #ffffdc; font-weight: bold; }
.hot td { background: #e6e6fa; }
.res .rest td { height: 11px; line-height: 10px; border-bottom: 0; }
.tasks .rest td { height: 5px; line-height: 5px; border-bottom: 0; }

.chart { width: 100%; overflow: hidden; background: #fff; }
.upper { height: 391px; }
.lower { height: 337px; }
.chart text { font: 11px "Liberation Sans", Arial, sans-serif; text-anchor: middle; fill: #333; }
.chart .tot { fill: #000; }
.chart .lab { font: bold 12px "Liberation Sans", Arial, sans-serif; text-anchor: start; fill: #41639b; }
.chart .grey { fill: #808080; }
.axis { stroke: #b1b1b1; }
.dots { stroke: #b4b4b4; stroke-dasharray: 1 1; }

.vbar { display: flex; flex-direction: column; background: #ededed; }
.vbar button, .hbar button { box-sizing: border-box; width: 17px; height: 17px; flex: none; border: 1px solid #d0d0d0; background: #fff; justify-content: center; }
.thumb { box-sizing: border-box; border: 1px solid #d0d0d0; background: #fff; height: 62px; }
.thumb.tall { height: 180px; }
.vbar .end { margin-top: auto; }
.hbar { grid-column: 1 / 4; display: flex; background: #ededed; height: 17px; }
.hbar .hthumb { box-sizing: border-box; width: 14px; border: 1px solid #d0d0d0; background: #fff; }
.hbar .end { margin-left: auto; }

.notes { position: absolute; left: 0; top: 0; width: 100%; height: 100%; pointer-events: none; }
.notes text { font: 19px "DejaVu Sans", Verdana, sans-serif; fill: #c00080; text-anchor: middle; white-space: pre; filter: drop-shadow(5px 5px 2px rgba(0, 0, 0, 0.4)); }
.notes line { stroke: #c00080; stroke-width: 4; stroke-dasharray: 13 5 4 5; }

.dock { flex: 1; min-height: 29px; display: flex; padding-left: 9px; }
.dock button { box-sizing: border-box; width: 75px; padding: 0 2px; border-bottom: 5px solid #d0d0d0; white-space: nowrap; }
.status { display: flex; align-items: center; height: 24px; background: #2b579a; color: #fff; padding: 0 6px 0 11px; }
.pool { width: 307px; }
.struct { flex: 1; }
.modes { display: flex; }
.modes button { width: 24px; height: 22px; justify-content: center; }
.modes .on { background: #1161c4; }
.zoomtext { margin-left: 4px; width: 65px; white-space: nowrap; }
.step { margin-left: 10px; }
.step.plus { margin-left: 11px; }
.status .arr { margin-left: 6px; }
.grip { margin-left: 11px; }
input[type="range"] { appearance: none; width: 86px; height: 14px; margin: 0 0 0 11px; background: linear-gradient(#8fa6cc, #8fa6cc) center / 100% 1px no-repeat; }
input[type="range"]::-webkit-slider-thumb { appearance: none; width: 5px; height: 14px; background: #fff; }
</style>
